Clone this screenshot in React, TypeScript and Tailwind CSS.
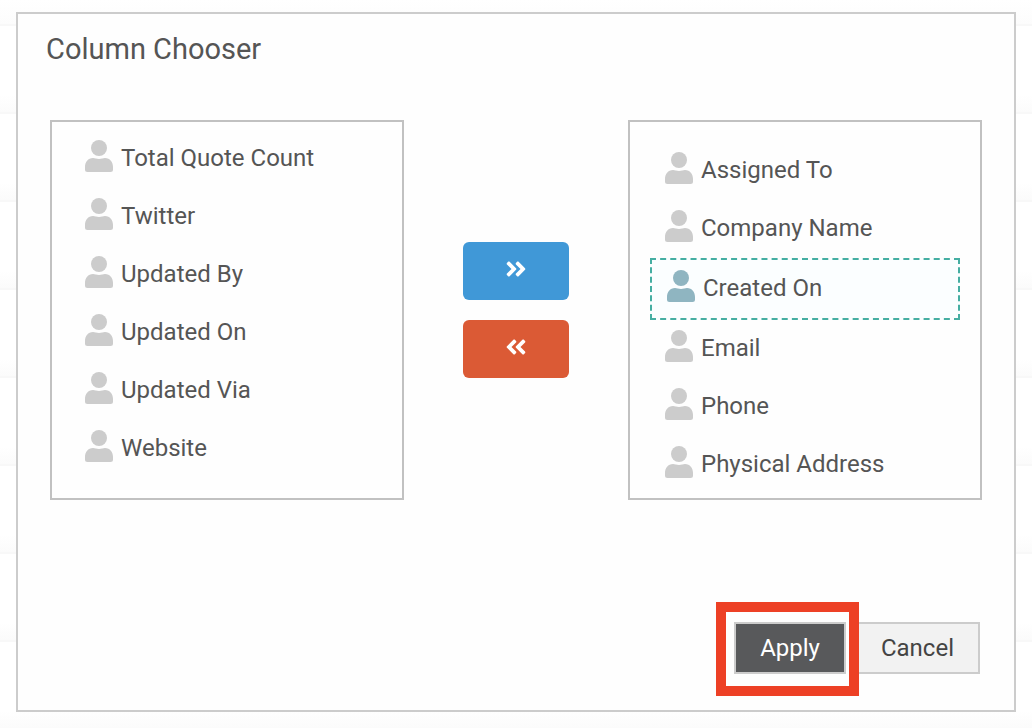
import { clsx } from 'clsx';
import { FaAngleDoubleLeft, FaAngleDoubleRight } from 'react-icons/fa';

const AVAILABLE = [
  'Total Quote Count',
  'Twitter',
  'Updated By',
  'Updated On',
  'Updated Via',
  'Website',
];

const CHOSEN = [
  'Assigned To',
  'Company Name',
  'Created On',
  'Email',
  'Phone',
  'Physical Address',
];

// rows of the table behind the dialog
const ROWS = [1, 2, 3, 4, 5, 6, 7, 8];

function PersonIcon({ className }: { className?: string }) {
  return (
    <svg viewBox="0 0 28 32" fill="currentColor" className={clsx('h-8 w-7 shrink-0', className)} aria-hidden="true">
      <circle cx="14" cy="8" r="8" />
      <path d="M8 18C10 18 11.500 19 14 19S18 18 20 18C25 18 28 22 28 27V29.500Q28 32 25.500 32H2.500Q0 32 0 29.500V27C0 22 3 18 8 18Z" />
    </svg>
  );
}

function ColumnItem({ name, selected }: { name: string; selected?: boolean }) {
  return (
    <li
      role="option"
      aria-selected={!!selected}
      className={clsx(
        'flex items-start gap-2 px-[15px] pt-[10px] pb-4',
        selected && 'border-2 border-dashed border-[#45aea2] bg-[#fbfeff]',
      )}
    >
      <PersonIcon className={selected ? 'text-[#8fb5c1]' : 'text-[#ccc]'} />
      <span className="pt-1 leading-7">{name}</span>
    </li>
  );
}

export default function App() {
  return (
    <div className="relative min-h-screen overflow-hidden bg-white px-4 py-3 font-['Roboto',sans-serif] text-2xl text-[#555]">
      <div className="absolute inset-x-0 top-0" aria-hidden="true">
        <div className="h-[26px] border-b-2 border-[#f8f8f8] bg-linear-to-b from-white to-[#fcfcfc]" />
        {ROWS.map((row) => (
          <div key={row} className="h-[88px] border-b-2 border-[#f8f8f8] bg-linear-to-b from-white from-80% to-[#fbfbfb]" />
        ))}
      </div>

      <div role="dialog" aria-labelledby="chooser-title" className="relative border-2 border-[#ccc] bg-[#fefefe] px-8 pt-4 pb-9">
        <h1 id="chooser-title" className="-ml-1 text-[29px] leading-[38px]">
          Column Chooser
        </h1>

        <div className="mt-[52px] flex items-stretch justify-between">
          <ul role="listbox" aria-label="Available columns" className="h-[380px] w-[354px] overflow-hidden border-2 border-[#c1c1c1] bg-[#fefefe] px-[18px] pt-2">
            {AVAILABLE.map((name) => (
              <ColumnItem key={name} name={name} />
            ))}
          </ul>

          <div className="flex flex-col justify-center gap-5">
            <button type="button" aria-label="Add column" className="flex h-[58px] w-[106px] items-center justify-center rounded-md bg-[#4098d7] pb-1 text-white">
              <FaAngleDoubleRight />
            </button>
            <button type="button" aria-label="Remove column" className="flex h-[58px] w-[106px] items-center justify-center rounded-md bg-[#db5a35] pb-1 text-white">
              <FaAngleDoubleLeft />
            </button>
          </div>

          <ul role="listbox" aria-label="Chosen columns" className="h-[380px] w-[354px] overflow-hidden border-2 border-[#c1c1c1] bg-[#fefefe] px-5 pt-5">
            {CHOSEN.map((name) => (
              <ColumnItem key={name} name={name} selected={name === 'Created On'} />
            ))}
          </ul>
        </div>

        <div className="mt-[122px] flex justify-end gap-[9px] pr-[2px]">
          <div className="relative z-10">
            <button type="button" className="h-[52px] border-2 border-[#ccc] bg-[#58595b] px-6 text-white">
              Apply
            </button>
            <div className="pointer-events-none absolute -top-5 -right-[13px] -bottom-[22px] -left-[18px] border-10 border-[#ed4025]" />
          </div>
          <button type="button" className="h-[52px] border-2 border-[#ccc] bg-[#f2f2f2] px-6 text-[#444]">
            Cancel
          </button>
        </div>
      </div>
    </div>
  );
}
